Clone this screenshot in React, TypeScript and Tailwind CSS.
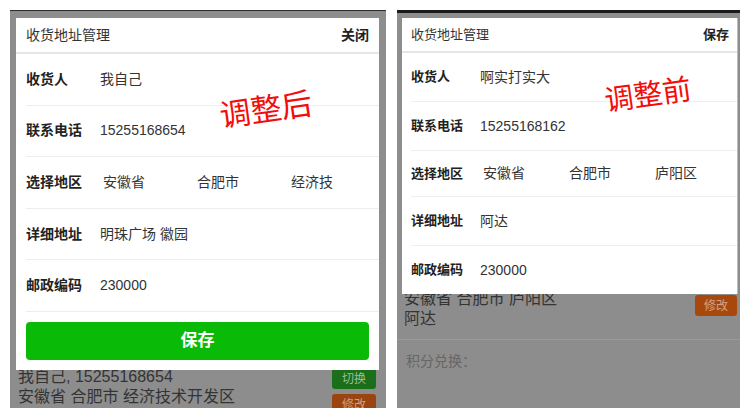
import React from 'react';

const font = { fontFamily: '"Liberation Sans", "Noto Sans CJK SC", sans-serif' };

const afterRows = [
  { label: '收货人', value: '我自己' },
  { label: '联系电话', value: '15255168654' },
  { label: '选择地区', regions: ['安徽省', '合肥市', '经济技'] },
  { label: '详细地址', value: '明珠广场 徽园' },
  { label: '邮政编码', value: '230000' },
];

const beforeRows = [
  { label: '收货人', value: '啊实打实大', h: 'h-[49px]' },
  { label: '联系电话', value: '15255168162', h: 'h-[49px]' },
  { label: '选择地区', regions: ['安徽省', '合肥市', '庐阳区'], h: 'h-[46px]' },
  { label: '详细地址', value: '阿达', h: 'h-[49px]' },
  { label: '邮政编码', value: '230000', h: 'h-[48px]' },
];

const AfterPanel = () => (
  <div className="relative w-[376px] h-[398px] overflow-hidden border-t border-[#2a2a2a] bg-[#8d8d8d]">
    {/* page behind the dialog */}
    <div className="flex justify-between pt-[356px] pl-[8px] pr-[10px]">
      <div className="text-[16px] leading-[20px] text-[#343434]">
        <p>我自己, 15255168654</p>
        <p>安徽省 合肥市 经济技术开发区</p>
      </div>
      <div className="flex flex-col gap-[5px] pt-[1px]">
        <span className="flex h-[21px] w-[44px] items-center justify-center rounded-[3px] bg-[#1b6e1a] text-[12px] text-[#9bbd9a]">切换</span>
        <span className="flex h-[22px] w-[44px] items-center justify-center rounded-[3px] bg-[#9a4410] text-[12px] text-[#c9a08a]">修改</span>
      </div>
    </div>

    <div className="absolute left-[6px] top-[7px] w-[363px] bg-white">
      <div className="flex h-[36px] items-center justify-between border-b-2 border-[#e6e6e6] px-[10px] text-[14px] text-[#333]">
        <span>收货地址管理</span>
        <span className="font-bold text-[#222]">关闭</span>
      </div>
      {afterRows.map((row) => (
        <div key={row.label} className="ml-[10px] flex h-[51.6px] items-center border-b border-[#eeeeee]">
          <span className="w-[74px] shrink-0 text-[14px] font-bold text-[#222]">{row.label}</span>
          {row.regions ? (
            <div className="grid grid-cols-[94px_94px_94px] text-[14px] text-[#333]">
              {row.regions.map((r) => (
                <span key={r} className="pl-[3px]">{r}</span>
              ))}
            </div>
          ) : (
            <span className="text-[14px] text-[#333]">{row.value}</span>
          )}
        </div>
      ))}
      <div className="p-[10px]">
        <div className="flex h-[38px] items-center justify-center rounded-[4px] bg-[#09bb07] text-[17px] font-bold text-white">保存</div>
      </div>
    </div>

    <span className="absolute left-[210px] top-[90px] origin-left -rotate-[8deg] text-[31px] leading-none text-[#f20d0d]">调整后</span>
  </div>
);

const BeforePanel = () => (
  <div className="relative w-[343px] h-[398px] overflow-hidden border-t-[3px] border-[#1a1a1a] bg-[#8d8d8d]">
    {/* page behind the dialog */}
    <div className="pt-[276px]">
      <div className="flex justify-between border-b border-[#999999] pb-[10px] pl-[7px] pr-[3px]">
        <div className="text-[16px] leading-[20px] text-[#343434]">
          <p>安徽省 合肥市 庐阳区</p>
          <p>阿达</p>
        </div>
        <span className="mt-[6px] flex h-[21px] w-[42px] items-center justify-center rounded-[3px] bg-[#a8480c] text-[12px] text-[#d0a489]">修改</span>
      </div>
      <p className="mt-[11px] pl-[9px] text-[14px] leading-[20px] text-[#666]">积分兑换：</p>
    </div>

    <div className="absolute left-[5px] top-[5px] w-[336px] border-r border-[#bdbdbd] bg-white">
      <div className="flex h-[35px] items-center justify-between border-b-2 border-[#e6e6e6] pl-[9px] pr-[8px] text-[13px] text-[#333]">
        <span>收货地址管理</span>
        <span className="font-bold text-[#222]">保存</span>
      </div>
      {beforeRows.map((row, i) => (
        <div
          key={row.label}
          className={`ml-[9px] flex items-center ${row.h} ${i < beforeRows.length - 1 ? 'border-b border-[#eeeeee]' : ''}`}
        >
          <span className="w-[69px] shrink-0 text-[13px] font-bold text-[#222]">{row.label}</span>
          {row.regions ? (
            <div className="grid grid-cols-[86px_86px_86px] text-[14px] text-[#333]">
              {row.regions.map((r) => (
                <span key={r} className="pl-[3px]">{r}</span>
              ))}
            </div>
          ) : (
            <span className="text-[14px] text-[#333]">{row.value}</span>
          )}
        </div>
      ))}
    </div>

    <span className="absolute left-[208px] top-[74px] origin-left -rotate-[8deg] text-[29px] leading-none text-[#f20d0d]">调整前</span>
  </div>
);

export default function App() {
  return (
    <div className="flex h-[419px] w-[750px] items-start gap-[11px] bg-white pl-[10px] pt-[10px]" style={font}>
      <AfterPanel />
      <BeforePanel />
    </div>
  );
}
